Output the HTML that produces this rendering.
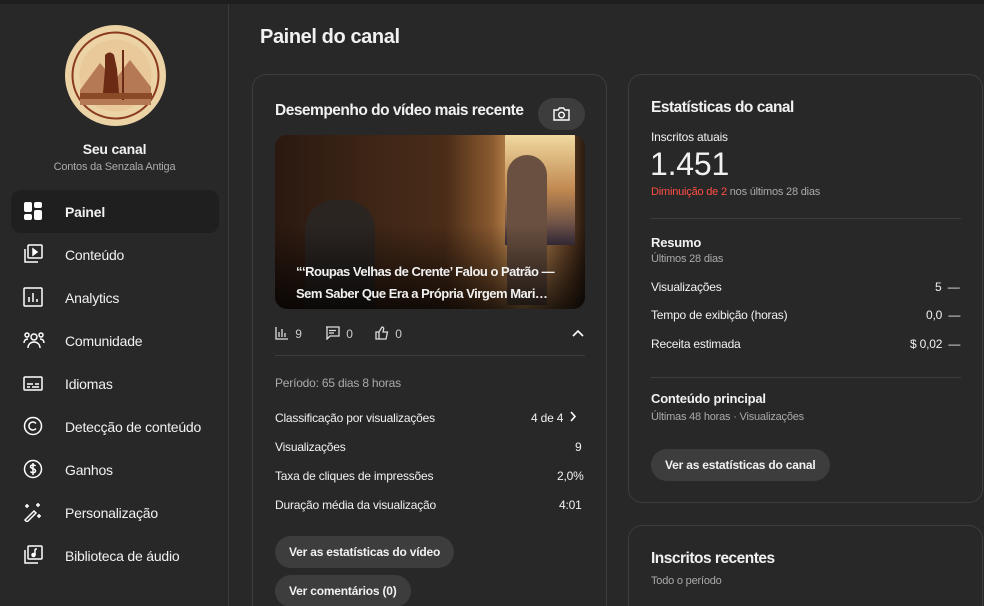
<!DOCTYPE html>
<html><head><meta charset="utf-8"><style>
*{box-sizing:border-box;margin:0;padding:0}
html,body{width:984px;height:606px;overflow:hidden}
body{background:#282828;font-family:"Liberation Sans",sans-serif;color:#f1f1f1;position:relative;letter-spacing:-0.2px}
.top{position:absolute;left:0;top:0;width:984px;height:4px;background:#1e1e1e}
.side{position:absolute;left:0;top:4px;width:229px;height:602px;border-right:1px solid #3a3a3a}
.av{position:absolute;left:65px;top:21px;width:101px;height:101px;border-radius:50%;background:#ecd3a5;overflow:hidden}
.nav{position:absolute;left:11px;width:208px;height:43px;border-radius:10px;display:flex;align-items:center;font-size:14px}
.nav svg{position:absolute;left:12px;top:11px}
.nav span{position:absolute;left:54px}
.sel{background:#1f1f1f;font-weight:bold}
.card{position:absolute;border:1px solid #3d3d3d;border-radius:14px;background:#282828}
.open{border-bottom:none;border-radius:14px 14px 0 0}
.t{position:absolute;white-space:nowrap}
.row{position:absolute;font-size:12px;white-space:nowrap}
.btn{position:absolute;background:#3d3d3d;border-radius:18px;font-size:12px;font-weight:bold;height:32px;line-height:32px;padding:0 14px;white-space:nowrap}
h2{font-size:15.5px;letter-spacing:-0.5px}
</style></head><body>
<div class="top"></div>
<div class="side">
 <div class="av"><svg width="101" height="101" viewBox="0 0 101 101"><circle cx="50.5" cy="50.5" r="43" fill="none" stroke="#8a3a20" stroke-width="2"/><circle cx="50.5" cy="50.5" r="36" fill="#e9c89a"/><path d="M15 65 L35 38 L50 55 L65 35 L86 62 L86 80 L15 80Z" fill="#b57a55"/><path d="M40 30 q5-5 9 0 l3 14 l2 24 h-16 l2-24z" fill="#6b2a14"/><line x1="58" y1="25" x2="58" y2="75" stroke="#6b2a14" stroke-width="2"/><rect x="15" y="68" width="72" height="6" fill="#8a4a28"/></svg></div>
 <div class="t" style="left:0;width:229px;text-align:center;top:137px;font-size:14px;font-weight:bold">Seu canal</div>
 <div class="t" style="left:0;width:229px;text-align:center;top:157px;font-size:11px;color:#aaa">Contos da Senzala Antiga</div>
 <div class="nav sel" style="top:186px"><svg width="20" height="20" viewBox="0 0 20 20" fill="#fff"><rect x="1" y="1" width="8" height="10" rx="2"/><rect x="11" y="1" width="8" height="6" rx="2"/><rect x="1" y="13" width="8" height="6" rx="2"/><rect x="11" y="9" width="8" height="10" rx="2"/></svg><span>Painel</span></div>
 <div class="nav" style="top:229px"><svg width="20" height="20" viewBox="0 0 20 20" fill="none" stroke="#fff" stroke-width="1.5"><rect x="5" y="1" width="14" height="13" rx="1"/><path d="M2 5v13h13"/><path d="M10 5l4 3-4 3z" fill="#fff"/></svg><span>Conteúdo</span></div>
 <div class="nav" style="top:272px"><svg width="20" height="20" viewBox="0 0 20 20" fill="none" stroke="#fff" stroke-width="1.5"><rect x="1" y="1" width="18" height="18" rx="1"/><path d="M6 15V10M10 15V6M14 15V12"/></svg><span>Analytics</span></div>
 <div class="nav" style="top:315px"><svg width="22" height="20" viewBox="0 0 22 20" fill="none" stroke="#fff" stroke-width="1.5"><circle cx="11" cy="7" r="3"/><path d="M5 18c0-4 3-6 6-6s6 2 6 6"/><circle cx="4" cy="5" r="2"/><circle cx="18" cy="5" r="2"/><path d="M1 13c0-2 1-4 4-4M21 13c0-2-1-4-4-4"/></svg><span>Comunidade</span></div>
 <div class="nav" style="top:358px"><svg width="20" height="20" viewBox="0 0 20 20" fill="none" stroke="#fff" stroke-width="1.5"><rect x="1" y="4" width="18" height="13" rx="1"/><path d="M4 11h6M12 11h4M4 14h3M9 14h7"/></svg><span>Idiomas</span></div>
 <div class="nav" style="top:401px"><svg width="20" height="20" viewBox="0 0 20 20" fill="none" stroke="#fff" stroke-width="1.5"><circle cx="10" cy="10" r="8.5"/><path d="M13 7.5a4 4 0 1 0 0 5"/></svg><span>Detecção de conteúdo</span></div>
 <div class="nav" style="top:444px"><svg width="20" height="20" viewBox="0 0 20 20" fill="none" stroke="#fff" stroke-width="1.5"><circle cx="10" cy="10" r="8.5"/><path d="M12.5 7c-1-1.5-5-1.5-5 .7s5 1.5 5 4-4 2.3-5 .8M10 4v12"/></svg><span>Ganhos</span></div>
 <div class="nav" style="top:487px"><svg width="20" height="20" viewBox="0 0 20 20" fill="none" stroke="#fff" stroke-width="1.5"><path d="M2 18l9-9 2 2-9 9z"/><path d="M4 2v4M2 4h4M15 1v4M13 3h4M16 12v4M14 14h4" /></svg><span>Personalização</span></div>
 <div class="nav" style="top:530px"><svg width="20" height="20" viewBox="0 0 20 20" fill="none" stroke="#fff" stroke-width="1.5"><rect x="5" y="1" width="14" height="13" rx="1"/><path d="M2 5v13h13"/><path d="M12 4v6" /><circle cx="10.5" cy="10" r="1.5" fill="#fff"/><path d="M12 4h2"/></svg><span>Biblioteca de áudio</span></div>
</div>
<div class="t" style="left:260px;top:26px;font-size:20px;font-weight:bold;letter-spacing:-0.4px">Painel do canal</div>

<div class="card open" style="left:252px;top:74px;width:355px;height:532px">
 <h2 class="t" style="left:22px;top:27px">Desempenho do vídeo mais recente</h2>
 <div style="position:absolute;left:285px;top:23px;width:47px;height:32px;border-radius:16px;background:#3d3d3d"><svg style="position:absolute;left:15px;top:8px" width="17" height="16" viewBox="0 0 17 16" fill="none" stroke="#fff" stroke-width="1.4"><path d="M1 4h4l1.5-2h4L12 4h4v10H1z"/><circle cx="8.5" cy="9" r="2.8"/></svg></div>
 <div style="position:absolute;left:22px;top:60px;width:310px;height:174px;border-radius:12px;overflow:hidden;background:linear-gradient(90deg,#2a1810 0%,#3d2516 30%,#4a2c18 55%,#8a5a30 70%,#d9a060 80%,#5a3a22 95%,#2a1a10 100%)">
  <div style="position:absolute;left:230px;top:0;width:70px;height:110px;background:linear-gradient(180deg,#f0d9a0,#c08850,#3c3040)"></div>
  <div style="position:absolute;left:232px;top:20px;width:40px;height:150px;border-radius:20px 20px 0 0;background:#6a5040"></div>
  <div style="position:absolute;left:30px;top:65px;width:70px;height:110px;border-radius:30px 30px 0 0;background:#2b2522"></div>
  <div style="position:absolute;left:0;top:90px;width:310px;height:84px;background:linear-gradient(180deg,rgba(0,0,0,0),rgba(0,0,0,.75))"></div>
  <div class="t" style="left:21px;top:126px;font-size:13px;font-weight:bold;line-height:22px;letter-spacing:-0.5px">“‘Roupas Velhas de Crente’ Falou o Patrão —<br>Sem Saber Que Era a Própria Virgem Mari…</div>
 </div>
 <div class="row" style="left:22px;top:251px;color:#ccc"><svg width="14" height="14" viewBox="0 0 14 14" fill="none" stroke="#ddd" stroke-width="1.3" style="vertical-align:-2px"><path d="M1 1v12h12M4 11V6M7 11V3M10 11V7"/></svg>&nbsp; 9</div>
 <div class="row" style="left:72px;top:251px;color:#ccc"><svg width="15" height="14" viewBox="0 0 15 14" fill="none" stroke="#ddd" stroke-width="1.3" style="vertical-align:-2px"><path d="M1 1h13v9H5l-3 3V1zM4 4.5h7M4 7h5"/></svg>&nbsp; 0</div>
 <div class="row" style="left:122px;top:251px;color:#ccc"><svg width="14" height="14" viewBox="0 0 14 14" fill="none" stroke="#ddd" stroke-width="1.3" style="vertical-align:-2px"><path d="M1 6h3v7H1zM4 6l3-5c1.5 0 2 1 1.5 2.5L8 6h4.5l-1.5 7H4"/></svg>&nbsp; 0</div>
 <svg style="position:absolute;left:319px;top:254px" width="12" height="8" viewBox="0 0 12 8" fill="none" stroke="#fff" stroke-width="1.6"><path d="M1 7l5-5 5 5"/></svg>
 <div style="position:absolute;left:22px;top:280px;width:310px;height:1px;background:#3d3d3d"></div>
 <div class="row" style="left:22px;top:301px;color:#aaa">Período: 65 dias 8 horas</div>
 <div class="row" style="left:22px;top:336px">Classificação por visualizações</div><div class="row" style="left:278px;top:336px">4 de 4 &nbsp;<svg width="8" height="11" viewBox="0 0 8 11" fill="none" stroke="#fff" stroke-width="1.6"><path d="M2 1l4 4.5L2 10"/></svg></div>
 <div class="row" style="left:22px;top:365px">Visualizações</div><div class="row" style="left:322px;top:365px">9</div>
 <div class="row" style="left:22px;top:394px">Taxa de cliques de impressões</div><div class="row" style="left:304px;top:394px">2,0%</div>
 <div class="row" style="left:22px;top:423px">Duração média da visualização</div><div class="row" style="left:306px;top:423px">4:01</div>
 <div class="btn" style="left:22px;top:461px">Ver as estatísticas do vídeo</div>
 <div class="btn" style="left:22px;top:500px">Ver comentários (0)</div>
</div>

<div class="card" style="left:628px;top:74px;width:355px;height:429px">
 <h2 class="t" style="left:22px;top:24px">Estatísticas do canal</h2>
 <div class="row" style="left:22px;top:55px">Inscritos atuais</div>
 <div class="t" style="left:21px;top:71px;font-size:32px">1.451</div>
 <div class="row" style="left:22px;top:111px;font-size:11px;color:#aaa"><span style="color:#ff4e45">Diminuição de 2</span> nos últimos 28 dias</div>
 <div style="position:absolute;left:22px;top:143px;width:310px;height:1px;background:#3d3d3d"></div>
 <div class="row" style="left:22px;top:160px;font-size:13px;font-weight:bold">Resumo</div>
 <div class="row" style="left:22px;top:178px;font-size:11px;color:#aaa">Últimos 28 dias</div>
 <div class="row" style="left:22px;top:205px">Visualizações</div><div class="row" style="left:306px;top:205px">5 &nbsp;—</div>
 <div class="row" style="left:22px;top:233px">Tempo de exibição (horas)</div><div class="row" style="left:297px;top:233px">0,0 &nbsp;—</div>
 <div class="row" style="left:22px;top:262px">Receita estimada</div><div class="row" style="left:281px;top:262px">$ 0,02 &nbsp;—</div>
 <div style="position:absolute;left:22px;top:302px;width:310px;height:1px;background:#3d3d3d"></div>
 <div class="row" style="left:22px;top:316px;font-size:13px;font-weight:bold">Conteúdo principal</div>
 <div class="row" style="left:22px;top:336px;font-size:11px;color:#aaa">Últimas 48 horas · Visualizações</div>
 <div class="btn" style="left:22px;top:374px">Ver as estatísticas do canal</div>
</div>

<div class="card open" style="left:628px;top:525px;width:355px;height:81px">
 <h2 class="t" style="left:22px;top:24px">Inscritos recentes</h2>
 <div class="row" style="left:22px;top:49px;font-size:11px;color:#aaa">Todo o período</div>
</div>
</body></html>
